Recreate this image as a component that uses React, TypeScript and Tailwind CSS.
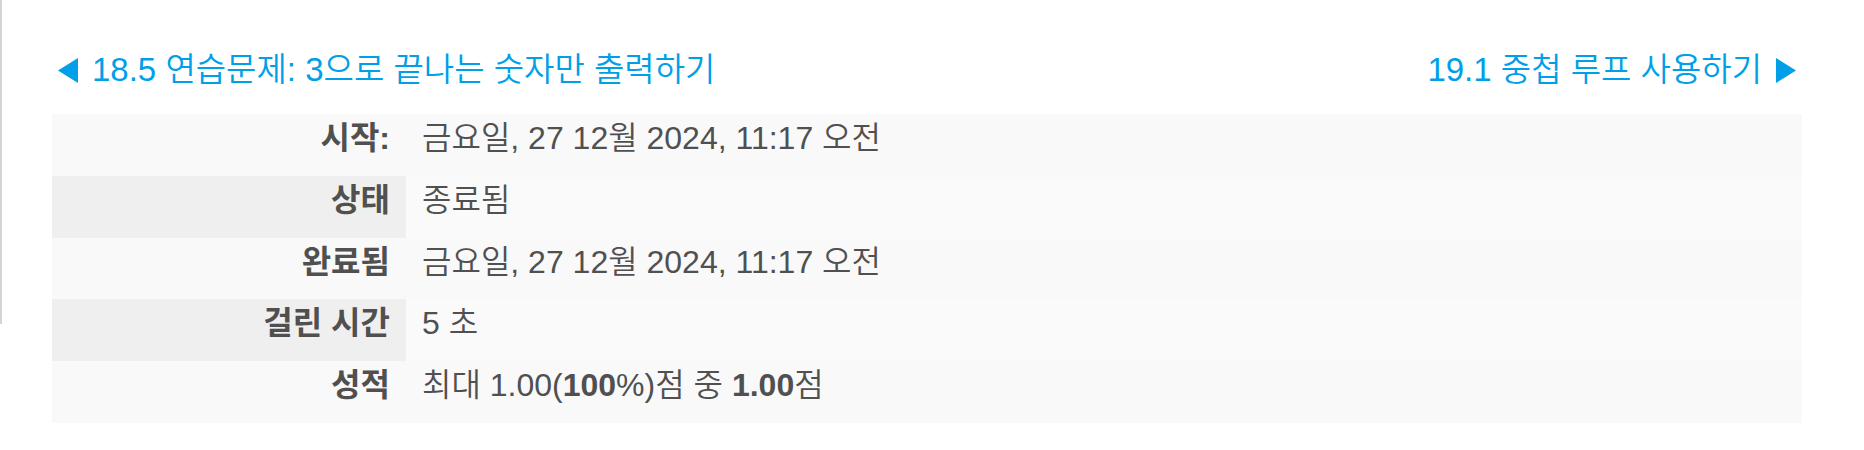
const rows = [
  { label: "시작:", value: <>금요일, 27 12월 2024, 11:17 오전</> },
  { label: "상태", value: <>종료됨</> },
  { label: "완료됨", value: <>금요일, 27 12월 2024, 11:17 오전</> },
  { label: "걸린 시간", value: <>5 초</> },
  { label: "성적", value: <>최대 1.00(<b className="font-bold">100</b>%)점 중 <b className="font-bold">1.00</b>점</> },
];

export default function App() {
  return (
    <div className="flex items-start bg-white font-['Liberation_Sans','Noto_Sans_CJK_KR',sans-serif] text-[32px] leading-[48px] font-[350] text-[#505050]">
      <div className="h-[324px] w-[2px] shrink-0 bg-[#d4d4d4]" />
      <main className="min-w-0 flex-1 pt-[46px] pr-[62px] pl-[50px]">
        <nav className="flex justify-between px-1.5 text-[33px] text-[#009fe8]">
          <a href="#prev" className="flex items-center gap-3.5">
            <svg viewBox="0 0 20 25" className="h-[25px] w-5" fill="currentColor" aria-hidden="true"><path d="M0 12.5 20 0v25z" /></svg>
            18.5 연습문제: 3으로 끝나는 숫자만 출력하기
          </a>
          <a href="#next" className="flex items-center gap-3.5">
            19.1 중첩 루프 사용하기
            <svg viewBox="0 0 20 25" className="h-[25px] w-5" fill="currentColor" aria-hidden="true"><path d="M20 12.5 0 0v25z" /></svg>
          </a>
        </nav>
        <table className="mt-5 h-[309px] w-full border-collapse">
          <tbody>
            {rows.map((r) => (
              <tr key={r.label} className="group bg-[#f9f9f9] even:bg-[#fafafa]">
                <th scope="row" className="w-[354px] px-4 pb-3 text-right align-top font-bold group-even:bg-[#efefef]">{r.label}</th>
                <td className="px-4 pb-3 align-top">{r.value}</td>
              </tr>
            ))}
          </tbody>
        </table>
      </main>
    </div>
  );
}
